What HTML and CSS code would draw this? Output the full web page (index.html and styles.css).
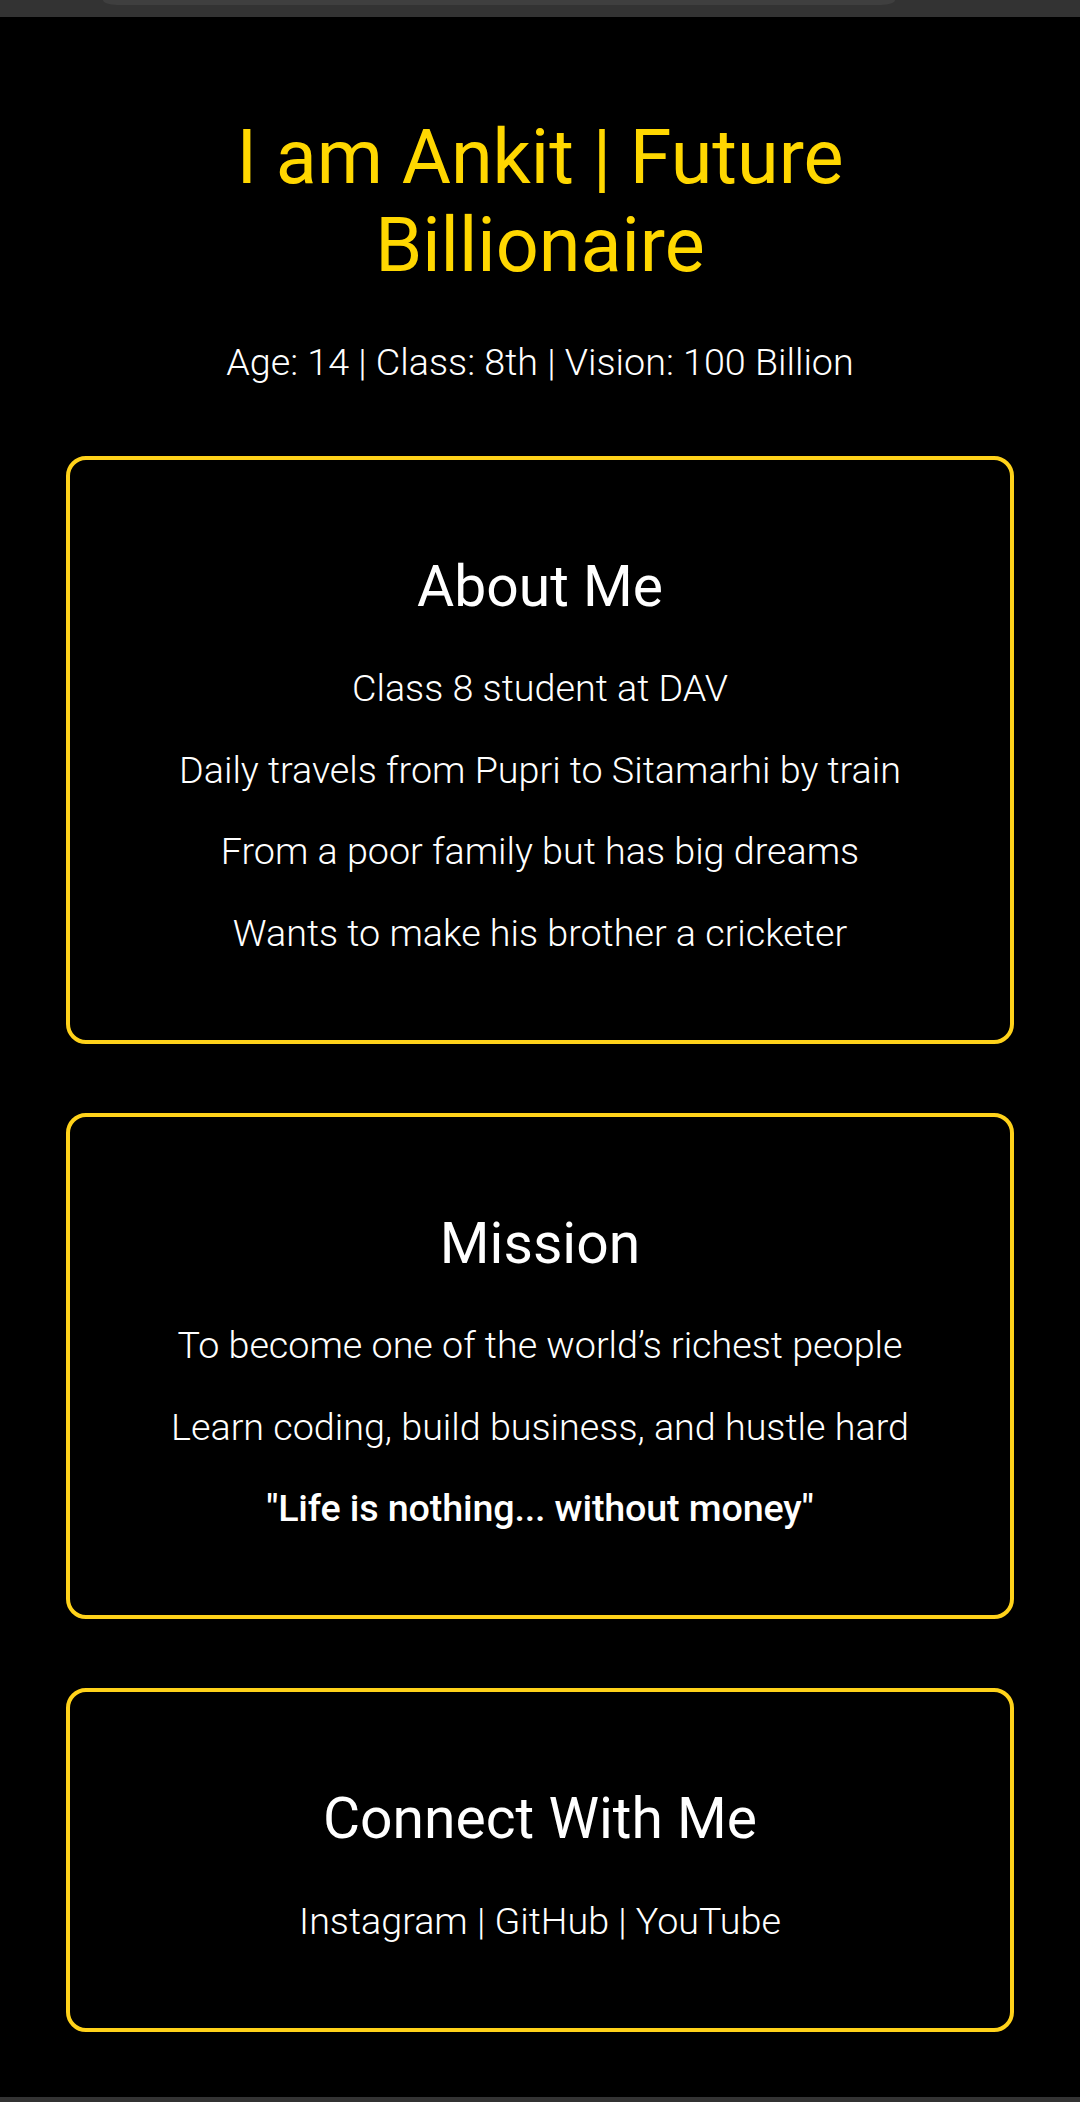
FILE: index.html
```html
<!DOCTYPE html>
<html lang="en">
<head>
<meta charset="utf-8">
<title>I am Ankit | Future Billionaire</title>
<link rel="stylesheet" href="styles.css">
</head>
<body>
  <div class="topbar"><div class="topbar-pill"></div></div>
  <main class="page">
    <header class="hero">
      <h1 class="hero-title">I am Ankit | Future Billionaire</h1>
      <p class="hero-sub">Age: 14 | Class: 8th | Vision: 100 Billion</p>
    </header>
    <section class="card">
      <h2 class="card-title">About Me</h2>
      <div class="card-body">
        <p>Class 8 student at DAV</p>
        <p>Daily travels from Pupri to Sitamarhi by train</p>
        <p>From a poor family but has big dreams</p>
        <p>Wants to make his brother a cricketer</p>
      </div>
    </section>
    <section class="card">
      <h2 class="card-title">Mission</h2>
      <div class="card-body">
        <p>To become one of the world’s richest people</p>
        <p>Learn coding, build business, and hustle hard</p>
        <p class="quote">"Life is nothing... without money"</p>
      </div>
    </section>
    <section class="card">
      <h2 class="card-title">Connect With Me</h2>
      <div class="card-body">
        <p>Instagram | GitHub | YouTube</p>
      </div>
    </section>
  </main>
  <div class="bottombar"></div>
</body>
</html>
```
FILE: styles.css
```css
* { box-sizing: border-box; }

html, body {
  margin: 0;
  padding: 0;
  background: #000;
}

body {
  height: 100vh;
  display: flex;
  flex-direction: column;
  font-family: Roboto, "Noto Sans", "Liberation Sans", sans-serif;
  color: #fff;
  overflow: hidden;
}

.topbar {
  height: 17px;
  background: #333333;
  flex-shrink: 0;
}

.topbar-pill {
  margin-left: 103px;
  width: 792px;
  height: 5px;
  background: #3f3f3f;
  border-radius: 0 0 14px 14px / 0 0 5px 5px;
}

.page {
  flex: 1;
  display: flex;
  flex-direction: column;
  gap: 69px;
  padding: 96px 66px 0 66px;
}

.hero {
  display: flex;
  flex-direction: column;
  align-items: center;
  gap: 51px;
  margin-bottom: 2.5px;
}

.hero-title {
  margin: 0;
  max-width: 880px;
  text-align: center;
  font-size: 75.5px;
  font-weight: 400;
  line-height: normal;
  color: #ffd700;
}

.hero-sub {
  margin: 0;
  font-size: 37.7px;
  font-weight: 300;
  line-height: normal;
  text-align: center;
}

.card {
  border: 4px solid #ffd21a;
  border-radius: 20px;
  padding: 93px 30px 85px;
  display: flex;
  flex-direction: column;
  align-items: center;
  gap: 46.5px;
}

.card-title {
  margin: 0;
  font-size: 57px;
  font-weight: 400;
  line-height: normal;
  text-align: center;
}

.card-body {
  display: flex;
  flex-direction: column;
  align-items: center;
  gap: 37.5px;
}

.card-body p {
  margin: 0;
  font-size: 37.7px;
  font-weight: 300;
  line-height: normal;
  text-align: center;
}

.card-body .quote {
  font-weight: 500;
  letter-spacing: -0.15px;
}

.bottombar {
  height: 5px;
  background: #333333;
  flex-shrink: 0;
}
```
